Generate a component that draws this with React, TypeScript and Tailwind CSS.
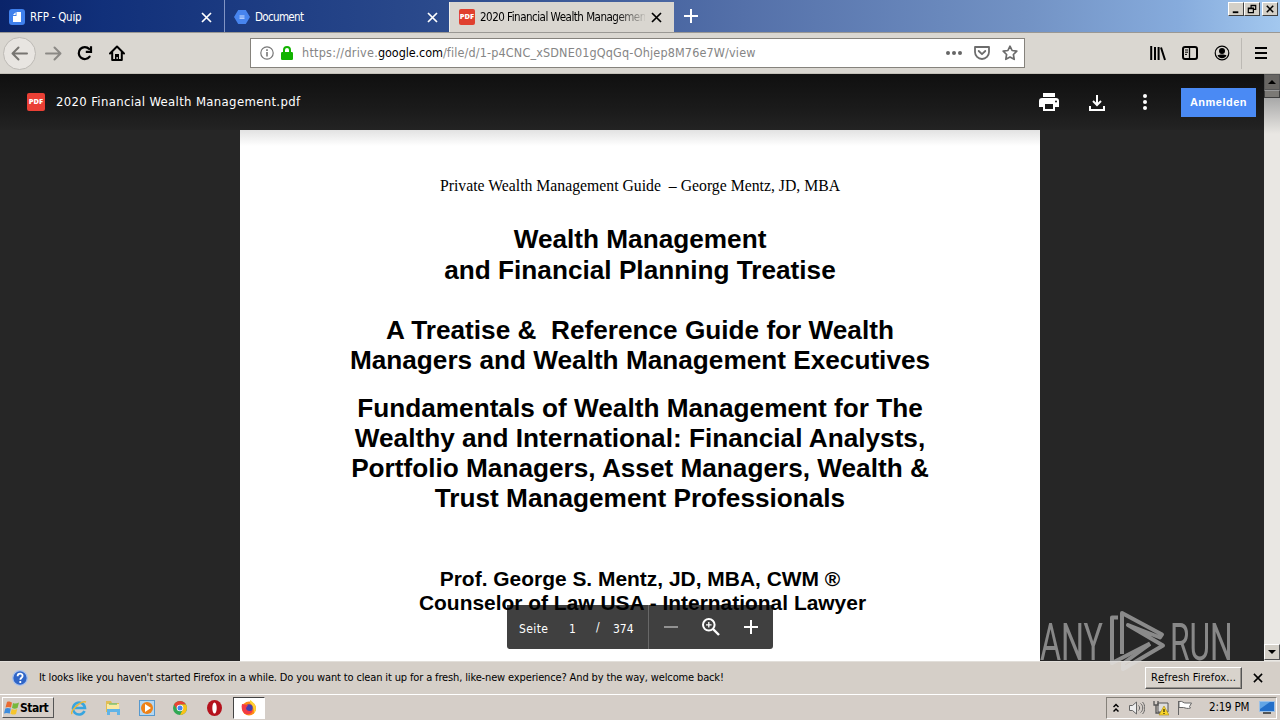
import React from "react";

function Close({ className = "", size = 11 }: { className?: string; size?: number }) {
  return (
    <svg className={"shrink-0 " + className} width={size} height={size} viewBox="0 0 11 11" fill="none" stroke="currentColor" strokeWidth="1.7">
      <path d="M1 1l9 9M10 1l-9 9" />
    </svg>
  );
}

function PdfBadge({ className = "" }: { className?: string }) {
  return (
    <span className={"flex shrink-0 items-center justify-center rounded-[2px] font-['Open_Sans',sans-serif] text-[7.500px] leading-none font-extrabold text-white " + className}>PDF</span>
  );
}

function TabStrip() {
  return (
    <div className="flex h-8 bg-[linear-gradient(90deg,#0a246a_0%,#11307a_8%,#2b4a8c_34%,#5470a9_58%,#7292c4_80%,#86abdc_92%,#a3c8ef_100%)] text-[11.5px] text-white">
      <div className="flex w-[225px] items-center border-r border-[#8295c4] pr-3 pl-[9px] pt-0.5">
        <svg width="16" height="16" viewBox="0 0 16 16">
          <rect width="16" height="16" rx="3" fill="#3f80ec" />
          <path d="M7.5 3H12v10H4V7h3.5z" fill="#fff" />
          <path d="M4 6l2.6-2.8V6z" fill="#fff" />
        </svg>
        <span className="ml-[5px] flex-1 pt-px tracking-[-0.25px]">RFP - Quip</span>
        <Close />
      </div>
      <div className="flex w-[224px] items-center pr-[11px] pl-[9px] pt-0.5">
        <svg width="16" height="16" viewBox="0 0 16 16">
          <path d="M4.2 1h7.6L16 8l-4.2 7H4.2L0 8z" fill="#4784ee" />
          <path d="M5.5 7h5M5.5 9.2h5" stroke="#cfe0ff" strokeWidth="1.2" />
        </svg>
        <span className="ml-[5px] flex-1 pt-px tracking-[-0.65px]">Document</span>
        <Close />
      </div>
      <div className="mt-0.5 flex w-[225px] items-center border-l border-[#f0eeea] bg-[#d9d6d0] pr-3 pl-[9px] text-black">
        <PdfBadge className="size-4 bg-[#e0402f]" />
        <span className="ml-[5px] min-w-0 flex-1 pt-px whitespace-nowrap tracking-[-0.5px] [mask-image:linear-gradient(90deg,#000_82%,transparent_102%)]">2020 Financial Wealth Managemen</span>
        <Close className="ml-1.5" />
      </div>
      <svg className="mt-[9px] ml-[10px]" width="14" height="14" viewBox="0 0 14 14" stroke="#fff" strokeWidth="2">
        <path d="M7 0v14M0 7h14" />
      </svg>
      <div className="mt-0.5 mr-[2px] ml-auto flex h-[14px]">
        <WinButton><path d="M4 10h6" strokeWidth="2" /></WinButton>
        <WinButton><path d="M6.500 5V2.500h5v4.500h-2M6 3h6M3.500 5.500h5.500v5H3.500zM3 6h6" strokeWidth="1.300" /></WinButton>
        <span className="w-0.5" />
        <WinButton><path d="M4 3l7 7M11 3l-7 7" strokeWidth="1.7" /></WinButton>
      </div>
    </div>
  );
}

function WinButton({ children }: { children: React.ReactNode }) {
  return (
    <span className="h-[14px] w-4 border border-t-white border-r-[#404040] border-b-[#404040] border-l-white bg-[#d4d0c8]">
      <svg width="14" height="12" viewBox="0 0 15 13" fill="none" stroke="#000">{children}</svg>
    </span>
  );
}

function NavBar() {
  return (
    <div className="flex h-[42px] items-center border-t border-b border-t-[#9a9894] border-b-[#c3c0b8] bg-[#dad7d1] pl-[3px]">
      <span className="flex size-[33px] shrink-0 items-center justify-center rounded-full border border-[#bdbab5] bg-[#e8e5e1]">
        <svg width="17" height="15" viewBox="0 0 17 15" fill="none" stroke="#777571" strokeWidth="2" strokeLinecap="round" strokeLinejoin="round"><path d="M16 7.500H1.500M7.500 1.500l-6 6 6 6" /></svg>
      </span>
      <svg className="ml-[9px]" width="17" height="15" viewBox="0 0 17 15" fill="none" stroke="#8b8985" strokeWidth="2" strokeLinecap="round" strokeLinejoin="round"><path d="M1 7.500h14.500M9.500 1.500l6 6-6 6" /></svg>
      <svg className="ml-[15px]" width="16" height="16" viewBox="0 0 16 16" fill="none" stroke="#000" strokeWidth="2.2"><path d="M12.600 11.600A6 6 0 1 1 12.200 4" strokeLinecap="round" /><path d="M14 1.200v5.600H8.800" /></svg>
      <svg className="ml-4" width="16" height="16" viewBox="0 0 16 16"><path d="M1 8.500L8 1.500l7 7M3.200 7.500V15h9.600V7.500" fill="none" stroke="#000" strokeWidth="2" strokeLinecap="round" strokeLinejoin="round" /><path d="M6 15V9h4v6H8.800v-3H7.500v3z" fill="#000" /></svg>
      <div className="ml-[125px] flex h-[30px] w-[775px] items-center border border-[#85827c] bg-white pl-[9px]">
        <svg width="14" height="14" viewBox="0 0 14 14" fill="none" stroke="#777"><circle cx="7" cy="7" r="6.2" strokeWidth="1.2" /><path d="M7 6v4.6M7 3.200V5" strokeWidth="1.6" /></svg>
        <svg className="ml-[7px]" width="12" height="14" viewBox="0 0 12 14"><path d="M3 7V4a3 3 0 0 1 6 0v3" fill="none" stroke="#12b300" strokeWidth="2" /><rect y="6" width="12" height="8" rx="1.2" fill="#12b300" /></svg>
        <span className="ml-[9px] flex-1 pt-px text-[12.500px] whitespace-nowrap text-[#858585]">
          <span className="tracking-[0.26px]">https://drive.</span><span className="tracking-[-0.08px] text-black">google.com</span><span className="tracking-[0.15px]">/file/d/1-p4CNC_xSDNE01gQqGq-Ohjep8M76e7W/view</span>
        </span>
        <svg width="16" height="4" viewBox="0 0 16 4" fill="#666"><circle cx="2" cy="2" r="2" /><circle cx="8" cy="2" r="2" /><circle cx="14" cy="2" r="2" /></svg>
        <svg className="ml-3" width="16" height="14" viewBox="0 0 16 14" fill="none" stroke="#6c6c6c" strokeWidth="1.8" strokeLinecap="round" strokeLinejoin="round"><path d="M1 1h14v5a7 7 0 0 1-14 0zM4.700 5L8 8.200 11.300 5" /></svg>
        <svg className="mr-[6px] ml-3" width="16" height="16" viewBox="0 0 16 16" fill="none" stroke="#6c6c6c" strokeWidth="1.7" strokeLinejoin="round"><path d="M8 1.200l2.100 4.300 4.700.7-3.400 3.300.8 4.800L8 12l-4.200 2.300.8-4.800L1.200 6.200l4.700-.7z" /></svg>
      </div>
      <svg className="ml-auto" width="16" height="16" viewBox="0 0 16 16" stroke="#000" strokeWidth="2"><path d="M1.200 1v14M5 2v13M8.600 2v13M11 2.500L15 15" /></svg>
      <svg className="ml-4" width="16" height="16" viewBox="0 0 16 16" fill="none" stroke="#000"><rect x="1" y="2" width="14" height="12" rx="2" strokeWidth="2" /><path d="M7.500 2v12" strokeWidth="1.3" /><path d="M3 5h3M3 7.200h3M3 9.400h2" /></svg>
      <svg className="ml-4" width="16" height="16" viewBox="0 0 16 16"><circle cx="8" cy="8" r="6.8" fill="none" stroke="#000" strokeWidth="1.2" /><circle cx="8" cy="6" r="3" /><path d="M3.500 10.300c2-1 7-1 9 0C11.500 12.600 10 13.300 8 13.300s-3.500-.7-4.500-3z" /></svg>
      <span className="ml-[11px] h-[31px] w-px bg-[#bcb9b4]" />
      <svg className="mr-[13px] ml-[13px]" width="12" height="12" viewBox="0 0 12 12" stroke="#000" strokeWidth="2"><path d="M0 1h12M0 6h12M0 11h12" /></svg>
    </div>
  );
}

function ViewerBar() {
  return (
    <div className="absolute inset-x-0 top-0 flex h-[56px] items-center bg-[linear-gradient(180deg,#101010_0%,#1b1b1b_65%,#232323_100%)] pr-2 pl-[27px] text-white">
      <PdfBadge className="size-[18px] bg-[#ea4035]" />
      <span className="ml-[11px] flex-1 text-[13px] tracking-[0.34px]">2020 Financial Wealth Management.pdf</span>
      <svg width="20" height="18" viewBox="0 0 20 18" fill="#fff"><path d="M4 0h12v4H4zM3 5a3 3 0 0 0-3 3v6h4v4h12v-4h4V8a3 3 0 0 0-3-3zm3 6h8v5H6zm11-3.500a1 1 0 1 1 0 2 1 1 0 0 1 0-2z" fillRule="evenodd" /></svg>
      <svg className="ml-[30px]" width="16" height="17" viewBox="0 0 16 17" fill="none" stroke="#fff" strokeWidth="2"><path d="M8 1v10M4 7l4 4 4-4M1 12v4h14v-4" /></svg>
      <svg className="ml-[38px]" width="4" height="16" viewBox="0 0 4 16" fill="#fff"><circle cx="2" cy="2" r="2" /><circle cx="2" cy="8" r="2" /><circle cx="2" cy="14" r="2" /></svg>
      <span className="ml-[34px] flex h-[29px] w-[75px] items-center justify-center bg-[#4a8af4] text-[11px] font-bold tracking-[0.5px] font-['Liberation_Sans',sans-serif]">Anmelden</span>
    </div>
  );
}

function PageSheet() {
  return (
    <div className="mt-[56px] ml-[240px] flex h-[531px] w-[800px] flex-col items-center overflow-hidden bg-[linear-gradient(180deg,#e2e2e2_0px,#fff_16px)] text-center font-['Liberation_Sans',sans-serif] font-bold whitespace-pre text-black">
      <p className="mt-[46px] h-5 font-['Liberation_Serif',serif] text-[15.750px] leading-5 font-normal">Private Wealth Management Guide  – George Mentz, JD, MBA</p>
      <div className="mt-[28px] text-[26.200px] leading-[31px]"><p>Wealth Management</p><p>and Financial Planning Treatise</p></div>
      <div className="mt-[29px] text-[26.200px] leading-[30px]"><p>A Treatise &amp;  Reference Guide for Wealth</p><p>Managers and Wealth Management Executives</p></div>
      <div className="mt-[18px] text-[26.200px] leading-[30px]"><p>Fundamentals of Wealth Management for The</p><p>Wealthy and International: Financial Analysts,</p><p>Portfolio Managers, Asset Managers, Wealth &amp;</p><p>Trust Management Professionals</p></div>
      <div className="mt-[54px] text-[20.950px] leading-6"><p>Prof. George S. Mentz, JD, MBA, CWM ®</p><p className="pl-[5px]">Counselor of Law USA - International Lawyer</p></div>
    </div>
  );
}

function PageControls() {
  return (
    <div className="absolute top-[531px] left-[507px] flex h-11 w-[266px] items-center rounded-b-[3px] bg-black/75 text-[12px] text-white">
      <span className="ml-3 w-[50px] pt-[3px] tracking-[0.4px]">Seite</span>
      <span className="w-[27px] pt-[3px]">1</span>
      <span className="w-[17px]">/</span>
      <span className="w-[35px] pt-[3px]">374</span>
      <span className="h-11 w-px bg-[#686868]" />
      <span className="ml-[15px] h-0.5 w-[14px] bg-[#929292]" />
      <svg className="ml-[24px]" width="18" height="18" viewBox="0 0 18 18" fill="none" stroke="#fff"><circle cx="6.800" cy="6.800" r="5.800" strokeWidth="2" /><path d="M11 11l6 6" strokeWidth="2.400" /><path d="M6.800 4v5.600M4 6.800h5.600" strokeWidth="1.300" /></svg>
      <svg className="ml-[24px]" width="14" height="14" viewBox="0 0 14 14" stroke="#fff" strokeWidth="2"><path d="M7 0v14M0 7h14" /></svg>
    </div>
  );
}

function Scrollbar() {
  const btn = "flex h-4 w-4 items-center justify-center border";
  return (
    <div className="flex h-[587px] w-4 flex-col bg-[#e9e7e3] bg-[linear-gradient(180deg,#707070_0px,#aaa_25px,transparent_60px)]">
      <span className={btn + " border-[#555] bg-[#686663]"}><svg width="8" height="4"><path d="M0 4l4-4 4 4z" /></svg></span>
      <span className="h-2 border border-[#3e3e3e] border-t-[#999] bg-[#7b7975]" />
      <span className={btn + " mt-auto mb-px border-t-white border-r-[#555] border-b-[#555] border-l-white bg-[#d4d0c8]"}><svg width="8" height="4"><path d="M0 0h8L4 4z" /></svg></span>
    </div>
  );
}

function Watermark() {
  return (
    <div className="absolute top-[608px] left-[1040px] flex h-[66px] w-[194px] opacity-55">
      <span className="mt-[13px] block w-[62px] shrink-0 origin-left scale-x-[0.62] font-['Roboto',sans-serif] text-[52px] leading-[44px] font-normal text-[#d8d8d8]">ANY</span>
      <svg className="shrink-0" width="68" height="66" viewBox="0 0 68 66" fill="none" stroke="#ddd" strokeWidth="4" strokeLinejoin="round">
        <path d="M16 9.500H10V55L48 35.500" />
        <path d="M20 46V5L60 26.500L58 29.500L26 17L61 37.500L21 61V55.500L48 36" />
      </svg>
      <span className="mt-[13px] block w-[62px] origin-left scale-x-[0.61] font-['Roboto',sans-serif] text-[52px] leading-[44px] font-normal text-[#d8d8d8]">RUN</span>
    </div>
  );
}

function NoticeBar() {
  return (
    <div className="flex h-[33px] items-center border-t border-[#e2dfda] bg-[#d5cfc8] pl-3 text-[11px] text-black">
      <svg width="16" height="16" viewBox="0 0 16 16"><circle cx="8" cy="8" r="7.300" fill="#2f65c7" stroke="#a9c2ed" strokeWidth="1.300" /><path d="M5.600 6.200C5.600 2.800 10.600 3 10.600 6c0 1.700-2.300 1.800-2.300 3.700M8.300 11v2" fill="none" stroke="#fff" strokeWidth="1.800" /></svg>
      <span className="ml-[11px] flex-1 tracking-[-0.14px]">It looks like you haven't started Firefox in a while. Do you want to clean it up for a fresh, like-new experience? And by the way, welcome back!</span>
      <span className="flex h-[22px] w-[97px] items-center justify-center border border-t-white border-r-[#555] border-b-[#555] border-l-white bg-[#d8d3cc] tracking-[0.1px] shadow-[inset_-1px_-1px_0_#99958f]">R<u>e</u>fresh Firefox...</span>
      <Close className="mr-[17px] ml-[11px]" size={10} />
    </div>
  );
}

function Taskbar() {
  return (
    <div className="flex h-[26px] items-center border-t border-white bg-[#d5cec8] text-[11px] text-black">
      <span className="ml-[2px] flex h-[21px] w-[52px] shrink-0 items-center border border-t-white border-r-[#555] border-b-[#555] border-l-white pl-px text-[12px] font-bold tracking-[-0.5px]">
        <svg className="shrink-0" width="16" height="16" viewBox="0 0 16 16"><path d="M3 2c2-1 3 0 5 .5L7 7.500C5 7 4 6.500 1.500 7.500z" fill="#ea6b32" /><path d="M9 3c2 1 4 .5 6-.5L13.500 8c-2 1-3.500 1-5.500 0z" fill="#77b83d" /><path d="M1.300 8.500c2-1 3.500-.5 5.500 0l-1 5C4 13 2 12.500 0 13.500z" fill="#3e8ddd" /><path d="M7.700 9c2 .7 3.500 1 5.500 0L12 14c-2 1-3.500.7-5.500-.3z" fill="#f6c52c" /></svg>
        Start
      </span>
      <div className="ml-[17px] flex items-center gap-[18px]">
        <svg width="16" height="16" viewBox="0 0 16 16" fill="none"><path d="M13.500 11A6 6 0 1 1 14 8H4" stroke="#38a5df" strokeWidth="2.600" /><path d="M1 14C-1 11 10 0 15 2" stroke="#e7b83d" strokeWidth="1.500" /></svg>
        <svg width="16" height="16" viewBox="0 0 16 16"><path d="M1 1h5l1 2h7v9H1z" fill="#e0bd55" /><path d="M2 4h12v7H2z" fill="#fbe9a1" /><path d="M2 15V9h13v6h-3v-3H5v3z" fill="#60b4e8" /><path d="M4 4h8" stroke="#7fc27a" strokeWidth="1.500" /></svg>
        <svg width="16" height="16" viewBox="0 0 16 16"><rect x=".5" y=".5" width="15" height="15" fill="#b4d7f2" stroke="#5799ce" /><circle cx="8" cy="8" r="6" fill="#ee8218" /><path d="M6 4l6 4-6 4z" fill="#fff" /></svg>
        <svg width="14" height="14" viewBox="0 0 14 14"><circle cx="7" cy="7" r="7" fill="#30a853" /><path d="M1 3.500A7 7 0 0 1 13 3.500H7L4 8z" fill="#e94335" /><path d="M13 3.500A7 7 0 0 1 7 14l3-6-3-4.500z" fill="#fbc116" /><circle cx="7" cy="7" r="3.300" fill="#fff" /><circle cx="7" cy="7" r="2.500" fill="#4385ef" /></svg>
        <svg className="ml-0.5" width="15" height="16" viewBox="0 0 15 16"><ellipse cx="7.500" cy="8" rx="7.500" ry="8" fill="#b5121d" /><ellipse cx="7.500" cy="8" rx="2.200" ry="5.500" fill="#fff" /></svg>
      </div>
      <span className="ml-[11px] flex h-[22px] w-[32px] items-center justify-center border border-t-[#444] border-r-white border-b-white border-l-[#444] bg-white">
        <svg width="16" height="16" viewBox="0 0 16 16"><circle cx="8" cy="8.500" r="7" fill="#ff8a17" /><path d="M9 0c5 3 8 9 4 13 0-4-1-8-4-10z" fill="#ffd331" /><circle cx="8" cy="8" r="3.700" fill="#443fb0" /><path d="M1 4c2 0 4 1 6 1l-2 3c0 3 4 4 7 2-1 4-5 6-9 3C1 11 0 7 1 4z" fill="#f23b45" /></svg>
      </span>
      <Tray />
    </div>
  );
}

function Tray() {
  return (
    <div className="mr-[3px] ml-auto flex h-[22px] w-[171px] items-center border border-t-[#85817a] border-r-white border-b-white border-l-[#85817a]">
      <svg className="ml-[6px]" width="6" height="10" viewBox="0 0 6 10" fill="none" stroke="#000" strokeWidth="1.500"><path d="M.5 4L3 1.500 5.500 4M.5 8.500L3 6l2.500 2.500" /></svg>
      <svg className="ml-[10px]" width="16" height="14" viewBox="0 0 16 14" fill="#eee" stroke="#666"><path d="M.5 4.500h3L7.500 1v12l-4-3.500h-3z" /><path d="M9.500 4.500c1.500 1 1.500 4 0 5M11.500 2.500c3 2 3 7 0 9M13.500 1c3 3 3 9 0 12" fill="none" /></svg>
      <svg className="ml-2" width="16" height="16" viewBox="0 0 16 16"><path d="M5 3h10v9H5z" fill="#ddd" stroke="#555" /><path d="M1 1v4h4V1M3 5v8h4" fill="none" stroke="#555" strokeWidth="1.300" /><path d="M11 6l5 9H6z" fill="#f9d52a" stroke="#a88914" strokeWidth=".6" /><path d="M11 9v3M11 13v1" stroke="#000" /></svg>
      <svg className="ml-2" width="16" height="15" viewBox="0 0 16 15" fill="#fff" stroke="#666"><path d="M1.500 1v14M2 1.500c4-1 4 2 7 1.500h5.500l-2 3.500 1 1.500c-3 1-5 0-7-.5H2z" /></svg>
      <span className="ml-4 text-[11.500px] tracking-[-0.2px] whitespace-nowrap">2:19 PM</span>
      <svg className="mr-px ml-auto shrink-0" width="16" height="13" viewBox="0 0 16 13"><rect x=".5" y=".5" width="15" height="10" fill="#236fc9" stroke="#9cc1e7" /><path d="M1 1h10L1 8z" fill="#62a5e5" /><path d="M4 12h8" stroke="#555" strokeWidth="2" /></svg>
    </div>
  );
}

export default function App() {
  return (
    <div className="relative flex h-[720px] w-[1280px] flex-col overflow-hidden font-['DejaVu_Sans_Condensed','DejaVu_Sans',sans-serif]">
      <TabStrip />
      <NavBar />
      <div className="flex h-[587px]">
        <div className="relative w-[1264px] bg-[#262626]">
          <ViewerBar />
          <PageSheet />
          <PageControls />
        </div>
        <Scrollbar />
      </div>
      <NoticeBar />
      <Taskbar />
      <Watermark />
    </div>
  );
}
